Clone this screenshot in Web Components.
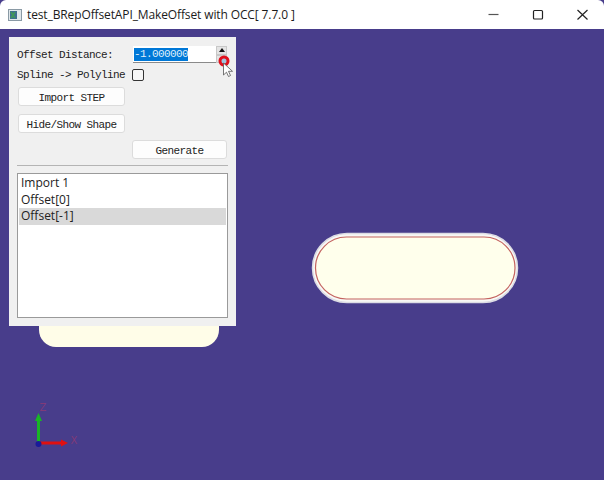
<!DOCTYPE html>
<html>
<head>
<meta charset="utf-8">
<title>test_BRepOffsetAPI_MakeOffset</title>
<style>
    html, body { margin: 0; height: 100%; overflow: hidden; background: #483d8b; }
</style>
</head>
<body>
<occ-window>
    <occ-titlebar slot="title">test_BRepOffsetAPI_MakeOffset with OCC[ 7.7.0 ]</occ-titlebar>
    <occ-viewport>
        <occ-panel>
            <occ-spinbox label="Offset Distance:" value="-1.000000"></occ-spinbox>
            <occ-check>Spline -&gt; Polyline</occ-check>
            <occ-button width="107" top="4">Import STEP</occ-button>
            <occ-button width="107" top="8">Hide/Show Shape</occ-button>
            <occ-button width="95" left="115" top="7">Generate</occ-button>
            <occ-list>
                <occ-item>Import 1</occ-item>
                <occ-item>Offset[0]</occ-item>
                <occ-item selected>Offset[-1]</occ-item>
            </occ-list>
        </occ-panel>
    </occ-viewport>
</occ-window>

<script>
/**
 * Window frame: title bar on top, everything else below it.
 */
class OccWindow extends HTMLElement {
    constructor() {
        super();
        this.attachShadow({ mode: 'open' }).innerHTML = `
            <style>
                :host {
                    display: flex;
                    flex-direction: column;
                    width: 604px;
                    height: 480px;
                    overflow: hidden;
                }
            </style>
            <slot name="title"></slot>
            <slot></slot>
        `;
    }
}

class OccTitlebar extends HTMLElement {
    constructor() {
        super();
        this.attachShadow({ mode: 'open' }).innerHTML = `
            <style>
                :host {
                    display: flex;
                    align-items: center;
                    flex: 0 0 29px;
                    background: #fff;
                    border-radius: 6px 6px 0 0;
                    font: 12px "Open Sans", "Noto Sans", sans-serif;
                    color: #1b1b1b;
                    padding-left: 8px;
                }
                .app { width: 14px; height: 12px; margin-right: 5px; flex: none; }
                .text { flex: 1; white-space: nowrap; letter-spacing: -0.12px; }
                .ctl { width: 44.5px; height: 29px; flex: none; display: block; }
            </style>
            <svg class="app" viewBox="0 0 14 12">
                <rect x="0.5" y="0.5" width="13" height="11" fill="#dfe6ea" stroke="#8a9aa5"/>
                <rect x="2" y="2" width="7" height="8" fill="#3f6f8f"/>
                <path d="M3 3l4 6M7 3l-4 6" stroke="#3f9a55" stroke-width="1.4"/>
            </svg>
            <span class="text"><slot></slot></span>
            <svg class="ctl" viewBox="0 0 44.5 29"><path d="M17.5 14.5h10" stroke="#555" stroke-width="1.2"/></svg>
            <svg class="ctl" viewBox="0 0 44.5 29"><rect x="18.5" y="10.5" width="9" height="8.5" rx="1" fill="none" stroke="#222" stroke-width="1.2"/></svg>
            <svg class="ctl" viewBox="0 0 44.5 29"><path d="M17.5 10l10 9.5M27.5 10l-10 9.5" stroke="#222" stroke-width="1.2" fill="none"/></svg>
        `;
    }
}

/**
 * 3D view: the shapes and the triad live on a free canvas, the panel floats over it.
 */
class OccViewport extends HTMLElement {
    constructor() {
        super();
        this.attachShadow({ mode: 'open' }).innerHTML = `
            <style>
                :host {
                    display: block;
                    position: relative;
                    flex: 1;
                    background: #483d8b;
                }
                svg { position: absolute; left: 0; top: 0; }
                text { font: 10px "DejaVu Sans", sans-serif; fill: #803a78; }
            </style>
            <svg width="604" height="451" viewBox="0 29 604 451">
                <!-- shape partly hidden by the panel -->
                <rect x="39" y="290" width="180" height="57" rx="17" fill="#fffde8"/>

                <!-- offset shape -->
                <rect x="312.5" y="233.5" width="205" height="69" rx="34.5" fill="#f8f8f5" stroke="#dcdce4" stroke-width="1.5"/>
                <rect x="315.5" y="237" width="199.5" height="62" rx="31" fill="#ffffec" stroke="#c4635f" stroke-width="1.2"/>

                <!-- triad -->
                <rect x="37" y="420" width="3" height="22" fill="#19b526"/>
                <path d="M38.5 413l3.5 8h-7z" fill="#19b526"/>
                <rect x="40" y="441.5" width="22" height="3" fill="#e01010"/>
                <path d="M68 443l-7 3.5v-7z" fill="#e01010"/>
                <circle cx="38.5" cy="444" r="3" fill="#1a1a9a"/>
                <text x="39.5" y="411">Z</text>
                <text x="70.5" y="444">X</text>
            </svg>
            <slot></slot>
        `;
    }
}

class OccPanel extends HTMLElement {
    constructor() {
        super();
        this.attachShadow({ mode: 'open' }).innerHTML = `
            <style>
                :host {
                    display: flex;
                    flex-direction: column;
                    align-items: flex-start;
                    position: absolute;
                    left: 9px;
                    top: 8px;
                    width: 227px;
                    height: 289px;
                    box-sizing: border-box;
                    padding: 9px 8px 8px 8px;
                    background: #f0f0f0;
                    font: 11px "Liberation Mono", monospace;
                    letter-spacing: -0.6px;
                    color: #222;
                }
            </style>
            <slot></slot>
        `;
    }
}

class OccSpinbox extends HTMLElement {
    constructor() {
        super();
        const label = this.getAttribute('label');
        const value = this.getAttribute('value');
        this.attachShadow({ mode: 'open' }).innerHTML = `
            <style>
                :host {
                    display: flex;
                    height: 17px;
                    width: 210px;
                    position: relative;
                }
                .label { width: 116px; line-height: 19px; white-space: nowrap; }
                .field {
                    width: 83px;
                    box-sizing: border-box;
                    background: #fff;
                    border-bottom: 1px solid #8a8a8a;
                    padding: 2px 0 0 1px;
                }
                .sel {
                    display: block;
                    width: 54px;
                    height: 13px;
                    line-height: 13px;
                    background: #0078d7;
                    color: #dfeefa;
                    overflow: hidden;
                }
                .btns { width: 11px; display: flex; flex-direction: column; }
                .btns span {
                    flex: 1;
                    display: flex;
                    align-items: center;
                    justify-content: center;
                    background: #e4e4e4;
                    border: 1px solid #c8c8c8;
                }
                .btns i { border: 3px solid transparent; border-top: 0; border-bottom: 4px solid #111; }
                .cursor { position: absolute; left: 200px; top: 6.5px; }
            </style>
            <span class="label">${label}</span>
            <span class="field"><span class="sel">${value}</span></span>
            <span class="btns"><span><i></i></span><span></span></span>
            <svg class="cursor" width="18" height="24" viewBox="0 0 18 24">
                <circle cx="7" cy="8" r="4" fill="#9fc6e0" stroke="#e0101c" stroke-width="3"/>
                <path d="M6.5 10v12l3-2.800 2 4.300 2-1-2-4.200h4z" fill="#fff" stroke="#555" stroke-width="0.8"/>
            </svg>
        `;
    }
}

class OccCheck extends HTMLElement {
    constructor() {
        super();
        this.attachShadow({ mode: 'open' }).innerHTML = `
            <style>
                :host {
                    display: flex;
                    align-items: center;
                    height: 16px;
                    margin-top: 4px;
                    white-space: nowrap;
                }
                .text { width: 115px; }
                .box {
                    width: 12px;
                    height: 12px;
                    box-sizing: border-box;
                    border: 1px solid #333;
                    border-radius: 2px;
                    background: #f6f6f6;
                }
            </style>
            <span class="text"><slot></slot></span>
            <span class="box"></span>
        `;
    }
}

class OccButton extends HTMLElement {
    static get observedAttributes() {
        return ['width', 'left', 'top'];
    }

    constructor() {
        super();
        this.attachShadow({ mode: 'open' }).innerHTML = `
            <style>
                :host {
                    display: flex;
                    align-items: center;
                    justify-content: center;
                    height: 19px;
                    box-sizing: border-box;
                    padding-top: 2px;
                    background: #fdfdfd;
                    border: 1px solid #dcdcdc;
                    border-radius: 3px;
                    white-space: nowrap;
                }
            </style>
            <slot></slot>
        `;
    }

    attributeChangedCallback() {
        this.style.width = `${this.getAttribute('width')}px`;
        this.style.marginLeft = `${this.getAttribute('left') || 1}px`;
        this.style.marginTop = `${this.getAttribute('top') || 0}px`;
    }
}

class OccList extends HTMLElement {
    constructor() {
        super();
        this.attachShadow({ mode: 'open' }).innerHTML = `
            <style>
                :host {
                    display: block;
                    align-self: stretch;
                    margin-top: 6px;
                    padding-top: 7px;
                    border-top: 1px solid #b4b4b4;
                }
                .box {
                    height: 145px;
                    box-sizing: border-box;
                    padding: 1px;
                    background: #fff;
                    border: 1px solid #9a9a9a;
                    font: 12px "Open Sans", "Noto Sans", sans-serif;
                    letter-spacing: 0;
                    color: #222;
                }
            </style>
            <div class="box"><slot></slot></div>
        `;
    }
}

class OccItem extends HTMLElement {
    constructor() {
        super();
        this.attachShadow({ mode: 'open' }).innerHTML = `
            <style>
                :host {
                    display: block;
                    height: 16.5px;
                    line-height: 16.5px;
                    padding-left: 2px;
                }
                :host([selected]) { background: #d9d9d9; }
            </style>
            <slot></slot>
        `;
    }
}

customElements.define('occ-window', OccWindow);
customElements.define('occ-titlebar', OccTitlebar);
customElements.define('occ-viewport', OccViewport);
customElements.define('occ-panel', OccPanel);
customElements.define('occ-spinbox', OccSpinbox);
customElements.define('occ-check', OccCheck);
customElements.define('occ-button', OccButton);
customElements.define('occ-list', OccList);
customElements.define('occ-item', OccItem);
</script>
</body>
</html>
